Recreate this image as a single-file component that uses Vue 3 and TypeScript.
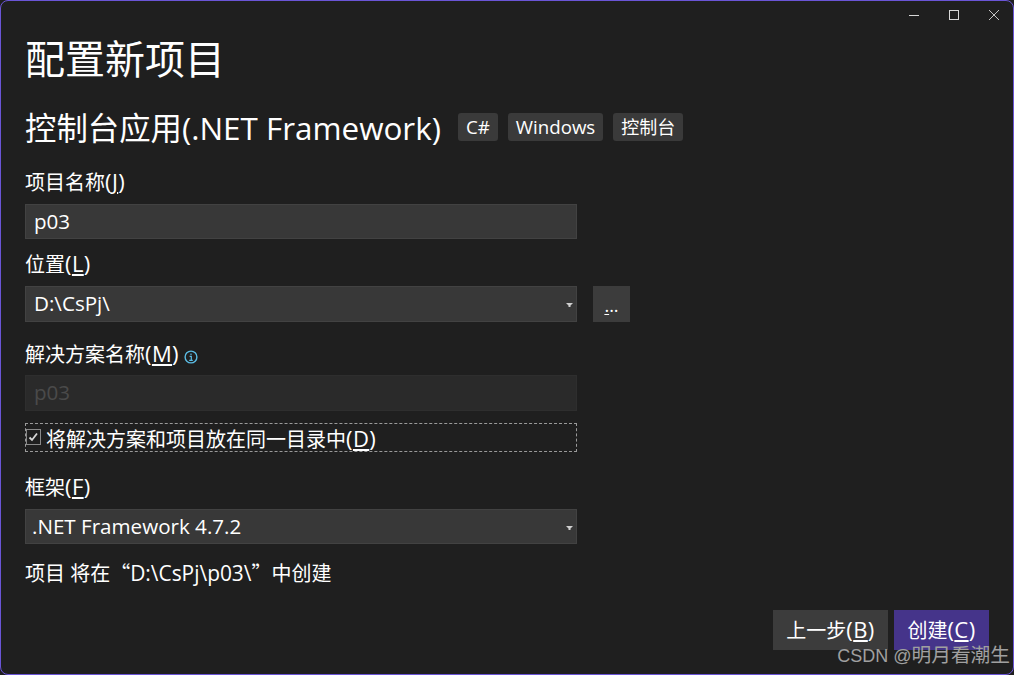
<script setup lang="ts">
const tags: { text: string; latin: boolean }[] = [
  { text: 'C#', latin: true },
  { text: 'Windows', latin: true },
  { text: '控制台', latin: false },
]
</script>

<template>
  <div class="window">
    <div class="caption">
      <svg class="cap-icon" width="12" height="12" viewBox="0 0 12 12"><path d="M1 6.5H11" stroke="#d8d8d8" fill="none" /></svg>
      <svg class="cap-icon" width="12" height="12" viewBox="0 0 12 12"><rect x="1.5" y="1.5" width="9" height="9" stroke="#d8d8d8" fill="none" /></svg>
      <svg class="cap-icon" width="12" height="12" viewBox="0 0 12 12"><path d="M1 1L11 11M11 1L1 11" stroke="#c4c4c4" fill="none" /></svg>
    </div>
    <main class="content">
      <h1 class="title">配置新项目</h1>
      <div class="subtitle-row">
        <h2 class="subtitle">控制台应用(.NET Framework)</h2>
        <div class="tags">
          <span v-for="t in tags" :key="t.text" class="tag" :class="{ 'tag-latin': t.latin }">{{ t.text }}</span>
        </div>
      </div>

      <label class="label first"><span>项目名称<span class="key">(<u>J</u>)</span></span></label>
      <div class="field h35"><span class="lat">p03</span></div>

      <label class="label second"><span>位置<span class="key">(<u>L</u>)</span></span></label>
      <div class="with-btn">
        <div class="field h36">
          <span class="lat">D:\CsPj\</span>
          <svg class="caret" width="7" height="4" viewBox="0 0 7 4"><path d="M0 0H7L4.5 2.5V4H2.5V2.5Z" fill="#d0d0d0" /></svg>
        </div>
        <button class="more"><span><u>.</u>..</span></button>
      </div>

      <div class="label third">
        <span>解决方案名称<span class="key">(<u>M</u>)</span></span>
        <svg class="info" width="14" height="14" viewBox="0 0 14 14">
          <circle cx="7" cy="7" r="5.9" fill="none" stroke="#5bbce4" stroke-width="1.4" />
          <path d="M7 3.4V5M5.6 6.3H7.3V10.3M5.2 10.3H8.8" fill="none" stroke="#5bbce4" stroke-width="1.2" />
        </svg>
      </div>
      <div class="field h36 disabled"><span class="lat">p03</span></div>

      <div class="check-row">
        <span class="box">
          <svg width="11" height="10" viewBox="0 0 11 10"><path d="M1.5 5.5L4 8L9 1.5" fill="none" stroke="#d8d8d8" stroke-width="1.8" /></svg>
        </span>
        <span>将解决方案和项目放在同一目录中<span class="key">(<u>D</u>)</span></span>
      </div>

      <label class="label fourth"><span>框架<span class="key">(<u>F</u>)</span></span></label>
      <div class="field h35 tight">
        <span class="lat">.NET Framework 4.7.2</span>
        <svg class="caret" width="7" height="4" viewBox="0 0 7 4"><path d="M0 0H7L4.5 2.5V4H2.5V2.5Z" fill="#d0d0d0" /></svg>
      </div>

      <p class="note">项目 将在<span class="cjk">“</span><span class="lat note-lat">D:\CsPj\p03\</span><span class="cjk">”</span>中创建</p>

      <div class="actions">
        <button class="btn"><span>上一步<span class="key">(<u>B</u>)</span></span></button>
        <button class="btn primary"><span>创建<span class="key">(<u>C</u>)</span></span></button>
      </div>
    </main>
    <div class="watermark"><span class="wm-latin">CSDN @</span>明月看潮生</div>
  </div>
</template>

<style>
html, body { margin: 0; background: #1f1f1f; }
</style>

<style scoped>
.window {
  position: relative;
  box-sizing: border-box;
  width: 1014px;
  height: 675px;
  overflow: hidden;
  background: #1f1f1f;
  border: 1px solid #6a55d6;
  border-radius: 8px;
  color: #fff;
  font-family: "Open Sans", "Noto Sans CJK SC", sans-serif;
  font-size: 20px;
}
.caption {
  display: flex;
  justify-content: flex-end;
  gap: 28px;
  padding: 8px 13px 0 0;
  height: 12px;
}
.cap-icon { display: block; }
.content { padding: 0 0 0 24px; }
.title {
  margin: 15px 0 0;
  font-size: 40px;
  font-weight: 400;
  line-height: 46px;
  height: 46px;
}
.subtitle-row {
  display: flex;
  align-items: center;
  margin-top: 24px;
  height: 44px;
}
.subtitle {
  margin: 0;
  font-size: 31.4px;
  font-weight: 400;
  line-height: 44px;
  white-space: nowrap;
}
.tags { display: flex; gap: 10px; margin: -2px 0 0 17px; }
.tag {
  display: flex;
  align-items: center;
  height: 28px;
  padding: 0 8px 2px;
  box-sizing: border-box;
  background: #3a3a3a;
  border-radius: 3px;
  font-size: 18px;
}
.tag-latin { font-size: 18.7px; }
.label {
  display: flex;
  align-items: center;
  height: 28px;
  line-height: 28px;
  white-space: pre;
}
.key { font-size: 22px; letter-spacing: 0.4px; }
.lat { font-size: 20.6px; }
.note-lat { font-size: 20.9px; }
.cjk { font-family: "Noto Sans CJK SC", sans-serif; }
.first { margin-top: 18px; margin-bottom: 8px; }
.second { margin-top: 11px; margin-bottom: 8px; }
.third { margin-top: 18px; margin-bottom: 7px; }
.fourth { margin-top: 21px; margin-bottom: 8px; }
.info { margin-left: 5px; margin-top: 5px; }
.field {
  position: relative;
  box-sizing: border-box;
  display: flex;
  align-items: center;
  width: 552px;
  padding: 0 0 2px 8px;
  background: #383838;
  border: 1px solid #424242;
}
.h35 { height: 35px; }
.h36 { height: 36px; }
.tight { padding-left: 6px; }
.caret { position: absolute; right: 3px; top: 16px; }
.disabled {
  background: #2a2a2a;
  border-color: #2e2e2e;
  color: #4a4a4a;
}
.with-btn { display: flex; gap: 16px; }
.more {
  width: 37px;
  height: 36px;
  padding: 2px 0 0;
  border: none;
  background: #3c3c3c;
  color: #fff;
  font: inherit;
  font-size: 18px;
  line-height: 20px;
}
.check-row {
  box-sizing: border-box;
  display: flex;
  align-items: center;
  gap: 5px;
  width: 552px;
  height: 29px;
  margin-top: 12px;
  border: 1px dashed #9a9a9a;
  white-space: nowrap;
}
.box {
  box-sizing: border-box;
  display: flex;
  align-items: center;
  justify-content: center;
  width: 15px;
  height: 16px;
  margin-top: -2px;
  border: 1px solid #8a8a8a;
}
.note {
  margin: 15px 0 0;
  line-height: 28px;
  height: 28px;
  white-space: pre;
}
.actions {
  display: flex;
  justify-content: flex-end;
  gap: 6px;
  margin-top: 23px;
  padding-right: 24px;
}
.btn {
  width: 115px;
  height: 40px;
  padding: 0 0 2px;
  border: none;
  background: #3c3c3c;
  color: #fff;
  font: inherit;
  white-space: nowrap;
}
.primary { width: 95px; background: #45348a; }
.watermark {
  position: absolute;
  right: 3px;
  bottom: 6px;
  color: #a0a0a0;
  font-family: "Liberation Sans", "Noto Sans CJK SC", sans-serif;
  font-size: 19.7px;
  line-height: 24px;
  white-space: nowrap;
}
.wm-latin { font-size: 18px; }
u { text-underline-offset: 2px; }
</style>
